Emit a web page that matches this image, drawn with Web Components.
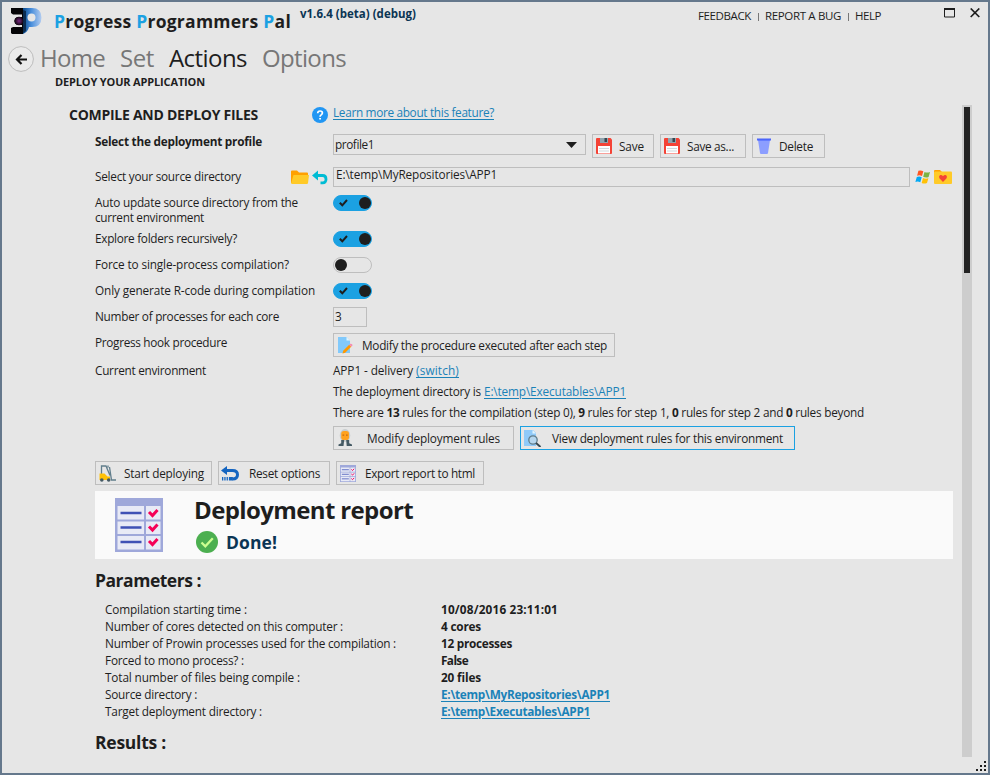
<!DOCTYPE html>
<html lang="en">
<head>
<meta charset="utf-8">
<title>Progress Programmers Pal</title>
<style>
html,body{margin:0;padding:0;width:990px;height:775px;overflow:hidden;background:#e6e6e6}
body{font-family:"Open Sans","Noto Sans",sans-serif;font-size:12px;color:#1e1e1e}
</style>
</head>
<body>
<pal-window></pal-window>
<script>
const ICONS = {
logo:[31,27,`<defs><linearGradient id="g" x1="0" x2="1"><stop offset="0" stop-color="#0b4a8c"/><stop offset=".45" stop-color="#4a8fdc"/><stop offset="1" stop-color="#b4cdf0"/></linearGradient><radialGradient id="h"><stop offset="0" stop-color="#7a2a80"/><stop offset="1" stop-color="#120512"/></radialGradient></defs><path d="M12 0h9q9.500 0 9.500 9.500 0 9.500-9.500 9.500h-3q-1 5-6 7z" fill="url(#g)"/><circle cx="20.500" cy="9.500" r="4" fill="#e6e6e6"/><path d="M0 0h12v5l2 3-1 5 1 5-2 3v5H1l-1-1v-5l2-1h9v-2H6l-2-1.500q-1.500-3 0-5L6 9h5V6.500H2L0 5z" fill="#050507"/><path d="M12 2l3 1v20l-3 2z" fill="#0a2c50"/><circle cx="8" cy="13" r="4.300" fill="url(#h)"/>`],
back:[26,26,`<circle cx="13" cy="13" r="12.400" fill="#eaeaea" stroke="#bdbdbd"/><path d="M19 13.500H9M13.500 9l-4.500 4.500 4.500 4.500" fill="none" stroke="#111" stroke-width="2.200"/>`],
max:[11,10,`<path d="M.5 1v8h10V1" fill="none" stroke="#1e1e1e"/><path d="M0 0h11v2H0z" fill="#1e1e1e"/>`],
close:[10,10,`<path d="M.7.500l8.600 8.500M9.300.500l-8.600 8.500" stroke="#1e1e1e" stroke-width="1.700"/>`],
help:[16,16,`<circle cx="8" cy="8" r="8" fill="#2196f3"/><path d="M5.700 6.200Q5.800 4 8 4q2.400 0 2.400 2 0 1-1.200 1.900Q8.100 8.600 8.100 9.700" fill="none" stroke="#fff" stroke-width="1.700"/><path d="M7.200 10.900h1.800v1.700H7.200z" fill="#fff"/>`],
folder:[18,15,`<path d="M0 1.500Q0 .5 1 .5h5l2 2h8q1 0 1 1V13H0z" fill="#ffa000"/><path d="M2.500 5H18l-1 8q-.1 1-1.200 1H1q-1 0-.8-1.200z" fill="#ffca28"/>`],
undo:[16,15,`<path d="M3 5.500h7.500q3.500 0 3.500 3.700t-3.500 3.600H8.500" fill="none" stroke="#00bcd4" stroke-width="2.800"/><path d="M0 5.500L6 .5v10z" fill="#00bcd4"/>`],
floppy:[16,16,`<path d="M0 1Q0 0 1 0h13.500L16 1.500V15q0 1-1 1H1q-1 0-1-1z" fill="#f44336"/><path d="M4 0h8v5H4z" fill="#90a4ae"/><path d="M8.500 0h2.500v4H8.500z" fill="#37474f"/><path d="M2 8h12v7.500H2z" fill="#fff"/><path d="M3 10h10v1H3zM3 12.500h10v1H3z" fill="#cfd8dc"/>`],
bin:[14,16,`<path d="M1 2h12l-2 13q-.1 1-1 1H4q-.9 0-1-1z" fill="#8c9eff"/><path d="M0 .500h14v2H0z" fill="#304ffe" opacity=".85"/>`],
win:[16,14,`<path d="M3.400.8Q6 0 8.300 1.300L7 6Q4.500 4.800 2.100 5.700z" fill="#ff5722"/><path d="M9.500 1.900Q12 3 15 1.900l-1.400 5Q11 8 8.200 6.700z" fill="#7cb342"/><path d="M1.800 7Q4.300 6 6.700 7.200l-1.400 5.100Q2.800 11 .4 12z" fill="#03a9f4"/><path d="M8 8q2.700 1.200 5.400.2L12 13q-2.800 1.200-5.300 0z" fill="#ffc107"/>`],
fav:[18,14,`<path d="M0 1q0-1 1-1h5l2 2h8v4H0z" fill="#ffa000"/><rect y="1.500" width="18" height="12.500" rx="1" fill="#ffca28"/><path d="M9 12L5.400 8.300Q4.500 5.500 6.500 5q1.600-.1 2.500 1.300Q9.900 4.900 11.500 5q2 .5 1.100 3.300z" fill="#f44336"/>`],
edit:[15,17,`<path d="M0 0h8.500L12 3.500V16H0z" fill="#81c9fb"/><path d="M8.500 0v3.500H12z" fill="#e1f5fe"/><path d="M5.200 13.800l6-6 2 2-6 6-2.700.8z" fill="#ff9800"/><path d="M11.200 7.800l1-1q1-.5 2 .5.700 1-.1 1.600l-.9.900z" fill="#f48fb1"/>`],
badge:[15,18,`<ellipse cx="7" cy="6.500" rx="5.300" ry="6.500" fill="#c7ccce"/><rect x="3.200" y="2" width="7.800" height="9" rx="2.800" fill="#ffa21f"/><path d="M4.500 5.500h1.700v1.300H4.500zM8 5.500h1.700v1.300H8z" fill="#c86b12"/><path d="M3.200 11h3l-.7 6H.5v-1.500l2.700-1.200zM8.200 11h3v3.300l2.800 1.200V17H8.700z" fill="#455a64"/>`],
search:[18,17,`<path d="M0 0h9l3 3v13H0z" fill="#90caf9"/><path d="M8.500 0v3.500H12z" fill="#e1f5fe"/><circle cx="9" cy="10" r="4.200" fill="#b5d6ee" stroke="#607d8b" stroke-width="1.300"/><path d="M12 13l4.500 4" stroke="#37474f" stroke-width="1.900"/>`],
fork:[18,17,`<path d="M2.500 9V1H7l4 9.500M9 .500v2M10.500 2l2 13H17" fill="none" stroke="#607d8b" stroke-width="1.300"/><path d="M.5 8.500h5l3 3H11V15H.5z" fill="#ffc107"/><circle cx="2.800" cy="15" r="1.800" fill="#455a64"/><circle cx="9.700" cy="15" r="1.800" fill="#455a64"/>`],
reset:[18,15,`<path d="M4 4.500h7.500q5 0 5 4.200t-5 4.300" fill="none" stroke="#1565c0" stroke-width="3"/><path d="M0 4.500L6 0v9z" fill="#1565c0"/><path d="M1 11h1.300v3.500H1zM3.300 11h1.300v3.500H3.300zM5.600 11h1.300v3.500H5.600zM7.900 11h4v3.500h-4z" fill="#1565c0"/>`],
report:[48,54,`<path d="M0 0h48v54H0z" fill="#9fa8da"/><path d="M2.500 8H29v13.500H2.500zM31 8h14.500v13.500H31zM2.500 23.500H29V36H2.500zM31 23.500h14.500V36H31zM2.500 38H29v13.500H2.500zM31 38h14.500v13.500H31z" fill="#e8eaf6"/><path d="M5.500 15h21M5.500 29.500h21M5.500 44h21" stroke="#3f51b5" stroke-width="2.400"/><path d="M34 14l3.500 3.600 5-5.600M34 28.500l3.500 3.600 5-5.600M34 43l3.500 3.600 5-5.600" fill="none" stroke="#f50057" stroke-width="3"/>`],
ok:[22,22,`<circle cx="11" cy="11" r="11" fill="#4caf50"/><path d="M5.500 11.500l3.800 3.800 7.500-8" fill="none" stroke="#ccff90" stroke-width="2.300"/>`],
caret:[11,6,`<path d="M0 0h11L5.500 6z" fill="#1e1e1e"/>`],
grip:[10,10,`<path d="M8 0h2v2H8zM4 4h2v2H4zM8 4h2v2H8zM0 8h2v2H0zM4 8h2v2H4zM8 8h2v2H8z" fill="#1e1e1e"/>`]
};
const define=(name,css,html,ready)=>{
  const t=document.createElement('template');
  t.innerHTML=`<style>${css}</style>${html}`;
  customElements.define(name,class extends HTMLElement{
    connectedCallback(){
      if(this.shadowRoot)return;
      this.attachShadow({mode:'open'}).append(t.content.cloneNode(true));
      if(ready)ready(this);
    }
  });
};

// A glyph from the ICONS table; width and height override its natural size.
define('ui-icon',':host{display:block;flex:none}svg{display:block}','',el=>{
  const [w,h,body]=ICONS[el.getAttribute('name')];
  el.shadowRoot.innerHTML+=`<svg width="${el.getAttribute('width')||w}" height="${el.getAttribute('height')||h}" viewBox="0 0 ${w} ${h}" preserveAspectRatio="none">${body}</svg>`;
});

// One line of text, tracked so that it spans the width "w".
define('ui-text',`:host{display:block;flex:none;width:max-content;white-space:pre;line-height:16px;font-size:11.8px}
:host([bold]){font-weight:700}:host([link]){color:#1b82b8;text-decoration:underline;text-underline-offset:1.5px}`,'<slot></slot>',el=>{
  if(el.hasAttribute('size'))el.style.fontSize=el.getAttribute('size')+'px';
  const w=+el.getAttribute('w');
  if(w)el.style.letterSpacing=(w-el.getBoundingClientRect().width)/el.textContent.length+'px';
});

define('ui-button',`:host{display:grid;grid-template-columns:var(--tx) 1fr;align-items:center;box-sizing:border-box;flex:none;height:24px;width:var(--w);border:1px solid #bebebe}
:host([active]){border-color:#1ba1e2}.i{padding-left:var(--ix,4px)}`,'<div class="i"><slot name="icon"></slot></div><slot></slot>');

define('ui-toggle',`:host{display:flex;box-sizing:border-box;width:39px;height:16px;border-radius:8px;border:1px solid #bebebe;align-items:center;padding:0 1px}
:host([on]){background:#1ba1e2;border-color:#1ba1e2;justify-content:space-between;padding:0 0 0 5px}
i{width:12px;height:12px;border-radius:50%;background:#1e1e1e}svg{display:none}:host([on]) svg{display:block}`,
'<svg width="9" height="8"><path d="M.8 3.800l2.500 2.500L8 1" fill="none" stroke="#1e1e1e" stroke-width="2"/></svg><i></i>');

define('ui-field',':host{display:flex;box-sizing:border-box;width:var(--w);height:var(--fh,20px);border:1px solid #bebebe;justify-content:space-between;padding:var(--p,0 0 0 2px);flex:none}','<slot></slot>');

// A labelled row of the form: label column, then the controls.
define('form-row',`:host{display:grid;grid-template-columns:217px 21px 1fr;height:var(--h);align-items:start}
.l{margin-top:var(--lt,-1px)}.c{display:flex;gap:6px;align-items:flex-start;margin-top:var(--ct,0px)}.t{display:flex;justify-content:flex-end;gap:3px;padding:3px 5px 0 0}`,
'<div class="l"><slot name="label"></slot></div><div class="t"><slot name="tools"></slot></div><div class="c"><slot></slot></div>');

define('report-banner',`:host{display:flex;box-sizing:border-box;height:68px;width:858px;background:#fafafa;padding:7px 0 0 20px}
.b{margin:-1px 0 0 31px}.d{display:flex;gap:8px;align-items:center;margin-left:2px}.h{height:34px}`,
`<ui-icon name="report"></ui-icon><div class="b"><div class="h"><ui-text bold size="24" w="219" style="line-height:26px">Deployment report</ui-text></div><div class="d"><ui-icon name="ok"></ui-icon><ui-text bold size="17.500" w="51" style="color:#0b3554;line-height:22px">Done!</ui-text></div></div>`);

define('param-list',`:host{display:grid;grid-template-columns:336px 1fr;grid-auto-rows:17px;padding-left:10px}`,'<slot></slot>');

define('scroll-bar',`:host{display:block;box-sizing:border-box;width:10px;height:652px;background:#cdcdcd;padding:2px}i{display:block;height:166px;background:#222}`,'<i></i>');

define('title-bar',`:host{display:flex;height:40px;align-items:flex-start;padding-left:9px}
.t{margin:7px 0 0 12px}.v{margin:4px 0 0 9px}em{font-style:normal;color:#1ba1e2}
.l{display:flex;gap:6.5px;margin:6px 0 0 auto;align-items:center}.l i{width:1px;height:8px;background:#777;margin-top:1px}.w{display:flex;gap:15px;margin:6px 8px 0 63px}`,
`<ui-icon name="logo" style="margin-top:6px"></ui-icon>
<ui-text class="t" bold size="17.500" w="237" style="line-height:24px"><em>P</em>rogress <em>P</em>rogrammers <em>P</em>al</ui-text>
<ui-text class="v" bold size="11.500" w="116" style="color:#0b3554">v1.6.4 (beta) (debug)</ui-text>
<div class="l"><ui-text size="11.500" w="53">FEEDBACK</ui-text><i></i><ui-text size="11.500" w="76">REPORT A BUG</ui-text><i></i><ui-text size="11.500" w="26">HELP</ui-text></div>
<div class="w"><ui-icon name="max"></ui-icon><ui-icon name="close"></ui-icon></div>`);

define('nav-tabs',`:host{display:flex;height:32px;padding-left:6px;color:#777;box-sizing:border-box}
ui-icon{margin:4px 6px 0 0}nav{display:flex;gap:15px}ui-text{line-height:32px}.on{color:#1e1e1e}`,
`<ui-icon name="back"></ui-icon><nav><ui-text size="24" w="65">Home</ui-text><ui-text size="24" w="34">Set</ui-text><ui-text class="on" size="24" w="78">Actions</ui-text><ui-text size="24" w="84">Options</ui-text></nav>`);

define('deploy-page',`:host{display:block;padding-left:93px;width:867px;height:652px}
.s{display:flex;height:29px;margin-left:-26px;align-items:flex-start}.s ui-icon{margin:2px 5px 0 54px}
.r{display:flex;gap:3px}.bar{display:flex;gap:6px;height:30px}h2{margin:0;font-weight:inherit;height:42px;padding-top:8px;box-sizing:border-box}`,
`<div class="s"><ui-text bold size="14" w="189" style="line-height:20px">COMPILE AND DEPLOY FILES</ui-text><ui-icon name="help"></ui-icon><ui-text link w="161" style="margin-top:-1px">Learn more about this feature?</ui-text></div>
<form-row style="--h:33px"><ui-text slot="label" bold w="167">Select the deployment profile</ui-text>
 <ui-field style="--w:253px;--fh:21px;--p:1px 8px 0 1px"><ui-text w="39">profile1</ui-text><ui-icon name="caret" style="margin-top:6px"></ui-icon></ui-field>
 <ui-button style="--w:62px;--tx:26px;--ix:3px"><ui-icon slot="icon" name="floppy"></ui-icon><ui-text w="25">Save</ui-text></ui-button>
 <ui-button style="--w:86px;--tx:26px;--ix:3px"><ui-icon slot="icon" name="floppy"></ui-icon><ui-text w="47">Save as...</ui-text></ui-button>
 <ui-button style="--w:73px;--tx:26px"><ui-icon slot="icon" name="bin"></ui-icon><ui-text w="34">Delete</ui-text></ui-button></form-row>
<form-row style="--h:28px;--lt:1px"><ui-text slot="label" w="146">Select your source directory</ui-text><ui-icon slot="tools" name="folder"></ui-icon><ui-icon slot="tools" name="undo"></ui-icon>
 <ui-field style="--w:577px"><ui-text w="161" style="margin-top:-2px">E:\\temp\\MyRepositories\\APP1</ui-text></ui-field><div class="r" style="padding-top:3px;margin-left:-1px"><ui-icon name="win"></ui-icon><ui-icon name="fav"></ui-icon></div></form-row>
<form-row style="--h:36px;--lt:0px"><div slot="label"><ui-text w="203" style="line-height:15px">Auto update source directory from the</ui-text><ui-text w="109" style="line-height:15px">current environment</ui-text></div><ui-toggle on></ui-toggle></form-row>
<form-row style="--h:26px"><ui-text slot="label" w="142">Explore folders recursively?</ui-text><ui-toggle on></ui-toggle></form-row>
<form-row style="--h:26px"><ui-text slot="label" w="194">Force to single-process compilation?</ui-text><ui-toggle></ui-toggle></form-row>
<form-row style="--h:24px"><ui-text slot="label" w="220">Only generate R-code during compilation</ui-text><ui-toggle on></ui-toggle></form-row>
<form-row style="--h:26px;--lt:1px"><ui-text slot="label" w="184">Number of processes for each core</ui-text><ui-field style="--w:34px;--p:0 0 0 1px"><ui-text w="7">3</ui-text></ui-field></form-row>
<form-row style="--h:30px;--lt:1px"><ui-text slot="label" w="132">Progress hook procedure</ui-text><ui-button style="--w:282px;--tx:28px"><ui-icon slot="icon" name="edit"></ui-icon><ui-text w="245">Modify the procedure executed after each step</ui-text></ui-button></form-row>
<form-row style="--h:21px;--ct:-1px"><ui-text slot="label" w="111">Current environment</ui-text><div class="r"><ui-text w="80">APP1 - delivery</ui-text><ui-text link w="43">(switch)</ui-text></div></form-row>
<form-row style="--h:21px;--ct:-1px"><div class="r"><ui-text w="148">The deployment directory is</ui-text><ui-text link w="142">E:\\temp\\Executables\\APP1</ui-text></div></form-row>
<form-row style="--h:21px;--ct:-1px"><ui-text w="531">There are <b>13</b> rules for the compilation (step 0), <b>9</b> rules for step 1, <b>0</b> rules for step 2 and <b>0</b> rules beyond</ui-text></form-row>
<form-row style="--h:35px"><ui-button style="--w:181px;--tx:33px"><ui-icon slot="icon" name="badge"></ui-icon><ui-text w="133">Modify deployment rules</ui-text></ui-button><ui-button active style="--w:275px;--tx:31px;--ix:3px"><ui-icon slot="icon" name="search"></ui-icon><ui-text w="231">View deployment rules for this environment</ui-text></ui-button></form-row>
<div class="bar"><ui-button style="--w:117px;--tx:28px;--ix:3px"><ui-icon slot="icon" name="fork"></ui-icon><ui-text w="80">Start deploying</ui-text></ui-button><ui-button style="--w:112px;--tx:30px;--ix:2px"><ui-icon slot="icon" name="reset"></ui-icon><ui-text w="71">Reset options</ui-text></ui-button><ui-button style="--w:148px;--tx:28px;--ix:3px"><ui-icon slot="icon" name="report" width="16" height="17"></ui-icon><ui-text w="110">Export report to html</ui-text></ui-button></div>
<report-banner></report-banner>
<h2><ui-text bold size="17.500" w="106" style="line-height:26px">Parameters :</ui-text></h2>
<param-list>
<ui-text w="142">Compilation starting time :</ui-text><ui-text bold w="117">10/08/2016 23:11:01</ui-text>
<ui-text w="238">Number of cores detected on this computer :</ui-text><ui-text bold w="40">4 cores</ui-text>
<ui-text w="291">Number of Prowin processes used for the compilation :</ui-text><ui-text bold w="71">12 processes</ui-text>
<ui-text w="139">Forced to mono process? :</ui-text><ui-text bold w="27">False</ui-text>
<ui-text w="195">Total number of files being compile :</ui-text><ui-text bold w="40">20 files</ui-text>
<ui-text w="92">Source directory :</ui-text><ui-text bold link w="169">E:\\temp\\MyRepositories\\APP1</ui-text>
<ui-text w="157">Target deployment directory :</ui-text><ui-text bold link w="149">E:\\temp\\Executables\\APP1</ui-text>
</param-list>
<h2 style="padding-top:9px"><ui-text bold size="17.500" w="71" style="line-height:26px">Results :</ui-text></h2>`);

define('pal-window',`:host{display:block;box-sizing:border-box;width:990px;height:775px;border:2px solid #65788c;background:#e6e6e6}
.sub{height:31px;padding-left:53px}.main{display:flex;height:652px}.grip{display:flex;justify-content:flex-end;padding:4px 2px 0 0}`,
`<title-bar></title-bar><nav-tabs></nav-tabs><div class="sub"><ui-text bold size="11" w="150">DEPLOY YOUR APPLICATION</ui-text></div>
<div class="main"><deploy-page></deploy-page><scroll-bar></scroll-bar></div><div class="grip"><ui-icon name="grip"></ui-icon></div>`);
</script>
</body>
</html>
